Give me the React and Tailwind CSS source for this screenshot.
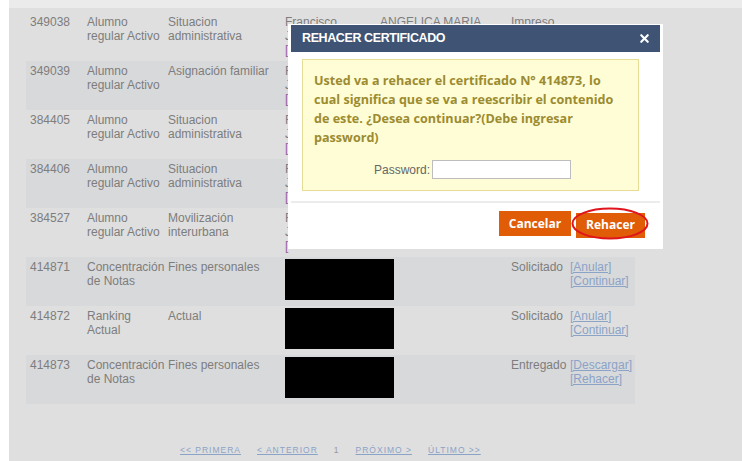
import { X } from 'lucide-react';

const rows = [
  { id: '349038', tipo: 'Alumno regular Activo', motivo: 'Situacion administrativa', nombre: true, estado: 'Impreso' },
  { id: '349039', tipo: 'Alumno regular Activo', motivo: 'Asignación familiar', nombre: true },
  { id: '384405', tipo: 'Alumno regular Activo', motivo: 'Situacion administrativa', nombre: true },
  { id: '384406', tipo: 'Alumno regular Activo', motivo: 'Situacion administrativa', nombre: true },
  { id: '384527', tipo: 'Alumno regular Activo', motivo: 'Movilización interurbana', nombre: true },
  { id: '414871', tipo: 'Concentración de Notas', motivo: 'Fines personales', estado: 'Solicitado', acciones: ['[Anular]', '[Continuar]'] },
  { id: '414872', tipo: 'Ranking Actual', motivo: 'Actual', estado: 'Solicitado', acciones: ['[Anular]', '[Continuar]'] },
  { id: '414873', tipo: 'Concentración de Notas', motivo: 'Fines personales', estado: 'Entregado', acciones: ['[Descargar]', '[Rehacer]'] },
];

function Row({ r, i }) {
  return (
    <div className={`flex h-[49px] pt-[3px] text-[12px] leading-[14px] text-[#7d7d7d] ${i % 2 ? 'bg-[#d8d9db]' : 'bg-[#dfdfdf]'}`}>
      <div className="w-[57px] pl-[4px]">{r.id}</div>
      <div className="w-[81px] pl-[4px] pr-1">{r.tipo}</div>
      <div className="w-[117px] pl-[4px] pr-1">{r.motivo}</div>
      <div className="w-[95px] pl-[4px]">
        {r.nombre ? (
          <>
            <div>Francisco</div>
            <div>J.</div>
            <div className="text-[#9a5f9a]">[</div>
          </>
        ) : (
          <div className="w-[109px] h-[41px] -mt-[1px] bg-black" />
        )}
      </div>
      <div className="w-[130px] pl-[4px]">{i === 0 ? 'ANGELICA MARIA' : ''}</div>
      <div className="w-[60px] pl-[5px]">{r.estado}</div>
      <div className="w-[69px] pl-[4px] flex flex-col">
        {(r.acciones || []).map((a) => (
          <a key={a} className="text-[#8ba3c7] underline">{a}</a>
        ))}
      </div>
    </div>
  );
}

function Modal() {
  return (
    <div className="absolute left-[288px] top-[24px] w-[375px] h-[225px] bg-white px-[3px] pt-[1px]">
      <div className="h-[27px] bg-[#3f5374] flex items-center justify-between pl-[11px] pr-[9px]">
        <span className="text-white font-bold text-[12.5px] tracking-[-0.4px]" style={{ fontFamily: '"Liberation Sans", Arial, sans-serif' }}>
          REHACER CERTIFICADO
        </span>
        <X size={13} strokeWidth={4} className="text-white" />
      </div>
      <div className="ml-[11px] mt-[7px] w-[337px] h-[132px] border border-[#e5dc95] bg-[#fefdd6] pt-[11px] pl-[11px] pr-[8px]">
        <p className="font-bold text-[12.6px] leading-[19px] text-[#9c8b30]" style={{ fontFamily: '"Open Sans", sans-serif' }}>
          Usted va a rehacer el certificado N° 414873, lo cual significa que se va a reescribir el contenido de este. ¿Desea continuar?(Debe ingresar password)
        </p>
        <div className="flex items-center mt-[13px] pl-[60px] text-[12px] text-[#666]">
          <span className="mr-[2px]">Password:</span>
          <input className="w-[139px] h-[19px] border border-[#bdbdbd] bg-white" />
        </div>
      </div>
      <div className="mt-[10px] h-[2px] bg-[#ececec]" />
      <div className="flex justify-end gap-[5px] mt-[8px] pr-[15px]" style={{ fontFamily: '"Open Sans", sans-serif' }}>
        <button className="w-[72px] h-[25px] bg-[#e05c07] text-white font-bold text-[12px]">Cancelar</button>
        <div className="relative">
          <button className="w-[69px] h-[25px] bg-[#e05c07] text-white font-bold text-[12px]">Rehacer</button>
          <svg className="absolute -left-[5px] -top-[4px]" width="78" height="33" viewBox="0 0 78 33">
            <ellipse cx="39" cy="16.5" rx="37.5" ry="15" fill="none" stroke="#e0141c" strokeWidth="2" />
          </svg>
        </div>
      </div>
    </div>
  );
}

export default function App() {
  const pages = ['<< PRIMERA', '< ANTERIOR', '1', 'PRÓXIMO >', 'ÚLTIMO >>'];
  return (
    <div className="relative w-[742px] h-[461px] bg-white overflow-hidden" style={{ fontFamily: '"Liberation Sans", Arial, sans-serif' }}>
      <div className="h-[8px] ml-[9px] bg-[#ebebeb]" />
      <div className="ml-[9px] h-[453px] bg-[#dfdfdf] pt-[4px] pl-[17px]">
        <div className="w-[609px]">
          {rows.map((r, i) => (
            <Row key={r.id} r={r} i={i} />
          ))}
        </div>
        <div className="flex gap-[16px] pl-[154px] mt-[40px] text-[8.5px] tracking-[1px] text-[#8ba3c7]">
          {pages.map((p) =>
            p === '1' ? (
              <span key={p} className="text-[#999]">{p}</span>
            ) : (
              <a key={p} className="underline">{p}</a>
            )
          )}
        </div>
      </div>
      <Modal />
    </div>
  );
}
